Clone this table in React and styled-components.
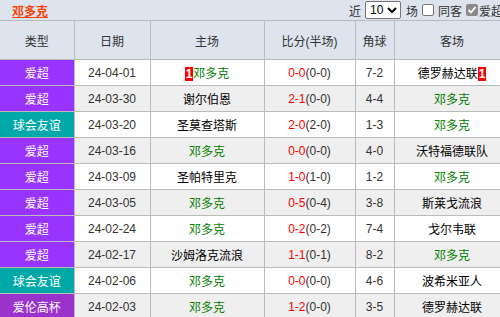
import styled, { createGlobalStyle } from "styled-components"

const GlobalStyle = createGlobalStyle`
    body {
        margin: 0;
        background: #fff;
        font-family: "Liberation Sans", "Noto Sans CJK SC", sans-serif;
        font-size: 12px;
        color: #333;
        overflow: hidden;
    }
`

const Page = styled.div`
    width: 500px;
    height: 317px;
    overflow: hidden;
    background: #dde4ee;
`

const TopBar = styled.div`
    height: 20px;
    display: flex;
    align-items: center;
    overflow: hidden;
`

const TeamTitle = styled.a`
    margin-left: 12px;
    color: #ff4000;
    font-weight: bold;
    font-size: 12px;
    text-decoration: underline;
`

const Controls = styled.div`
    margin-left: auto;
    margin-right: -3px;
    display: flex;
    align-items: center;
    flex-shrink: 0;
    font-size: 12px;
    color: #333;
`

const Label = styled.span`
    margin: ${p => p.$m || "0"};
`

const FakeSelect = styled.span`
    box-sizing: border-box;
    width: 36px;
    height: 18px;
    margin: 0 5px 0 4px;
    padding: 0 3px 0 4px;
    background: #fff;
    border: 1px solid #767676;
    border-radius: 2px;
    display: flex;
    align-items: center;
    justify-content: space-between;
    color: #000;
    font-size: 12px;
`

const Check = styled.span`
    width: 12px;
    height: 12px;
    box-sizing: border-box;
    border-radius: 2px;
    margin: ${p => p.$m || "0"};
    border: 1px solid ${p => (p.$on ? "#8a8a8a" : "#767676")};
    background: ${p => (p.$on ? "#8a8a8a" : "#fff")};
    display: flex;
    align-items: center;
    justify-content: center;
`

const Table = styled.table`
    border-collapse: collapse;
    table-layout: fixed;
    width: 510px;
`

const Th = styled.th`
    height: 38px;
    padding: 0;
    font-weight: normal;
    color: #333;
    border: 1px solid #bbb;
    border-left: ${p => (p.$first ? "none" : "1px solid #bbb")};
    text-align: center;
`

const Tr = styled.tr`
    background: ${p => (p.$alt ? "#efefef" : "#fff")};
`

const Td = styled.td`
    height: 25px;
    padding: 0;
    text-align: center;
    white-space: nowrap;
    overflow: hidden;
    border: 1px solid #bbb;
    color: #333;
`

const TypeCell = styled(Td)`
    border-left: none;
    color: #fff;
    background: ${p => p.$bg};
`

const Team = styled.span`
    color: ${p => (p.$home ? "#008000" : "#000")};
`

const Badge = styled.span`
    display: inline-block;
    background: #f00;
    color: #fff;
    font-weight: bold;
    font-size: 12px;
    line-height: 14px;
    padding: 0 1px;
`

const Red = styled.span`
    color: #f00;
`

const colors = {
    "爱超": "#9933ff",
    "球会友谊": "#00a8a8",
    "爱伦高杯": "#9933cc",
}

const rows = [
    ["爱超", "24-04-01", "邓多克", "0-0", "0-0", "7-2", "德罗赫达联", true],
    ["爱超", "24-03-30", "谢尔伯恩", "2-1", "0-0", "4-4", "邓多克"],
    ["球会友谊", "24-03-20", "圣莫查塔斯", "2-0", "2-0", "1-3", "邓多克"],
    ["爱超", "24-03-16", "邓多克", "0-0", "0-0", "4-0", "沃特福德联队"],
    ["爱超", "24-03-09", "圣帕特里克", "1-0", "1-0", "1-2", "邓多克"],
    ["爱超", "24-03-05", "邓多克", "0-5", "0-4", "3-8", "斯莱戈流浪"],
    ["爱超", "24-02-24", "邓多克", "0-2", "0-2", "7-4", "戈尔韦联"],
    ["爱超", "24-02-17", "沙姆洛克流浪", "1-1", "0-1", "8-2", "邓多克"],
    ["球会友谊", "24-02-06", "邓多克", "0-0", "0-0", "4-6", "波希米亚人"],
    ["爱伦高杯", "24-02-03", "邓多克", "1-2", "0-0", "3-5", "德罗赫达联"],
]

const TEAM = "邓多克"

function TeamName({ name, badge, side }) {
    return (
        <>
            {badge && side === "home" && <Badge>1</Badge>}
            <Team $home={name === TEAM}>{name}</Team>
            {badge && side === "away" && <Badge>1</Badge>}
        </>
    )
}

function App() {
    return (
        <Page>
            <GlobalStyle />
            <TopBar>
                <TeamTitle>邓多克</TeamTitle>
                <Controls>
                    <Label>近</Label>
                    <FakeSelect>
                        10
                        <svg width="10" height="8" viewBox="0 0 10 8">
                            <path d="M1 2 L5 6 L9 2" stroke="#000" strokeWidth="2" fill="none" />
                        </svg>
                    </FakeSelect>
                    <Label>场</Label>
                    <Check $m="0 4px 0 4px" />
                    <Label>同客</Label>
                    <Check $on $m="0 1px 0 4px">
                        <svg width="10" height="10" viewBox="0 0 10 10">
                            <path d="M1.5 5 L4 7.5 L8.5 2" stroke="#fff" strokeWidth="1.8" fill="none" />
                        </svg>
                    </Check>
                    <Label>爱超</Label>
                </Controls>
            </TopBar>
            <Table>
                <colgroup>
                    <col style={{ width: 74 }} />
                    <col style={{ width: 76 }} />
                    <col style={{ width: 114 }} />
                    <col style={{ width: 91 }} />
                    <col style={{ width: 39 }} />
                    <col style={{ width: 116 }} />
                </colgroup>
                <thead>
                    <tr>
                        <Th $first>类型</Th>
                        <Th>日期</Th>
                        <Th>主场</Th>
                        <Th>比分(半场)</Th>
                        <Th>角球</Th>
                        <Th>客场</Th>
                    </tr>
                </thead>
                <tbody>
                    {rows.map((r, i) => (
                        <Tr key={i} $alt={i % 2 === 1}>
                            <TypeCell $bg={colors[r[0]]}>{r[0]}</TypeCell>
                            <Td>{r[1]}</Td>
                            <Td><TeamName name={r[2]} badge={r[7]} side="home" /></Td>
                            <Td><Red>{r[3]}</Red>({r[4]})</Td>
                            <Td>{r[5]}</Td>
                            <Td><TeamName name={r[6]} badge={r[7]} side="away" /></Td>
                        </Tr>
                    ))}
                </tbody>
            </Table>
        </Page>
    )
}

export default App
